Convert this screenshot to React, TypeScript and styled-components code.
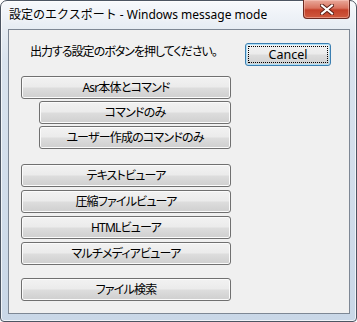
import React from "react";
import styled, { createGlobalStyle } from "styled-components";

const Global = createGlobalStyle`
  html, body { margin: 0; padding: 0; background: #ffffff; }
  body { width: 357px; height: 322px; overflow: hidden; }
`;

const Window = styled.div`
  box-sizing: border-box;
  width: 357px;
  height: 322px;
  display: flex;
  flex-direction: column;
  border: 1px solid #4c5562;
  border-radius: 7px 7px 4px 4px;
  background: linear-gradient(to bottom, #f7f9fc 0px, #e6ecf3 28px, #d9e3ee 60px, #c9d7e7 100%);
  box-shadow: inset 0 0 0 1px rgba(255, 255, 255, 0.7);
  font-family: "Noto Sans", "Noto Sans CJK JP", sans-serif;
`;

const TitleBar = styled.div`
  height: 28px;
  flex: none;
  display: flex;
  justify-content: space-between;
  align-items: flex-start;
  padding: 0 6px 0 8px;
`;

const TitleText = styled.div`
  font-family: "Noto Sans", "Noto Sans CJK JP", sans-serif;
  font-size: 12px;
  line-height: 16px;
  padding-top: 6px;
  color: #000;
  text-shadow: 0 0 6px rgba(255, 255, 255, 0.9);
  white-space: nowrap;
`;

const CloseButton = styled.div`
  box-sizing: border-box;
  width: 47px;
  height: 19px;
  margin-top: -1px;
  border: 1px solid #6b2a22;
  border-top: none;
  border-radius: 0 0 4px 4px;
  background: linear-gradient(to bottom, #e9a99b 0%, #d9735f 45%, #c4412a 55%, #cf5a3f 100%);
  box-shadow: inset 0 0 0 1px rgba(255, 210, 200, 0.45);
  display: flex;
  align-items: center;
  justify-content: center;
`;

const Client = styled.div`
  flex: 1;
  margin: 0 6px 7px 7px;
  border: 1px solid #7d8794;
  background: #f0f0f0;
  display: flex;
  align-items: flex-start;
  padding: 13px 0 0 12px;
  font-family: "Noto Sans", "Noto Sans CJK JP", sans-serif;
  font-size: 12px;
  color: #000;
  font-feature-settings: "palt";
`;

const LeftCol = styled.div`
  width: 210px;
  display: flex;
  flex-direction: column;
`;

const Label = styled.div`
  height: 16px;
  line-height: 16px;
  margin-top: 1px;
  padding-left: 9px;
  white-space: nowrap;
  letter-spacing: -1px;
`;

const Group = styled.div<{ $top: number; $gap: number }>`
  display: flex;
  flex-direction: column;
  gap: ${(p) => p.$gap}px;
  margin-top: ${(p) => p.$top}px;
`;

const Button = styled.div<{ $indent?: boolean }>`
  box-sizing: border-box;
  height: 23px;
  margin-left: ${(p) => (p.$indent ? 18 : 0)}px;
  border: 1px solid #707070;
  border-radius: 3px;
  background: linear-gradient(to bottom, #f2f2f2 0%, #ebebeb 48%, #dddddd 52%, #cfcfcf 100%);
  box-shadow: inset 0 0 0 1px #fbfbfb;
  display: flex;
  align-items: center;
  justify-content: center;
  line-height: 16px;
  white-space: nowrap;
  letter-spacing: -0.8px;
`;

const CancelButton = styled(Button)`
  width: 86px;
  margin-left: 14px;
  padding: 2px;
  border-color: #3c7fb1;
  box-shadow: inset 0 0 0 1px #aee0f8;
  letter-spacing: 0;
  font-size: 12.5px;
`;

const FocusRect = styled.div`
  box-sizing: border-box;
  flex: 1;
  align-self: stretch;
  border: 1px dotted #000;
  display: flex;
  align-items: center;
  justify-content: center;
`;

export default function App() {
  return (
    <>
      <Global />
      <Window>
        <TitleBar>
          <TitleText>設定のエクスポート - Windows message mode</TitleText>
          <CloseButton>
            <svg width="14" height="11" viewBox="0 0 14 11">
              <path d="M2 1.5 L12 9.5 M12 1.5 L2 9.5" stroke="#5a2018" strokeWidth="4" strokeLinecap="square" />
              <path d="M2 1.5 L12 9.5 M12 1.5 L2 9.5" stroke="#ffffff" strokeWidth="2" strokeLinecap="square" />
            </svg>
          </CloseButton>
        </TitleBar>
        <Client>
          <LeftCol>
            <Label>出力する設定のボタンを押してください。</Label>
            <Group $top={16} $gap={2}>
              <Button>Asr本体とコマンド</Button>
              <Button $indent>コマンドのみ</Button>
              <Button $indent>ユーザー作成のコマンドのみ</Button>
            </Group>
            <Group $top={15} $gap={3}>
              <Button>テキストビューア</Button>
              <Button>圧縮ファイルビューア</Button>
              <Button>HTMLビューア</Button>
              <Button>マルチメディアビューア</Button>
            </Group>
            <Group $top={13} $gap={2}>
              <Button>ファイル検索</Button>
            </Group>
          </LeftCol>
          <CancelButton>
            <FocusRect>Cancel</FocusRect>
          </CancelButton>
        </Client>
      </Window>
    </>
  );
}
